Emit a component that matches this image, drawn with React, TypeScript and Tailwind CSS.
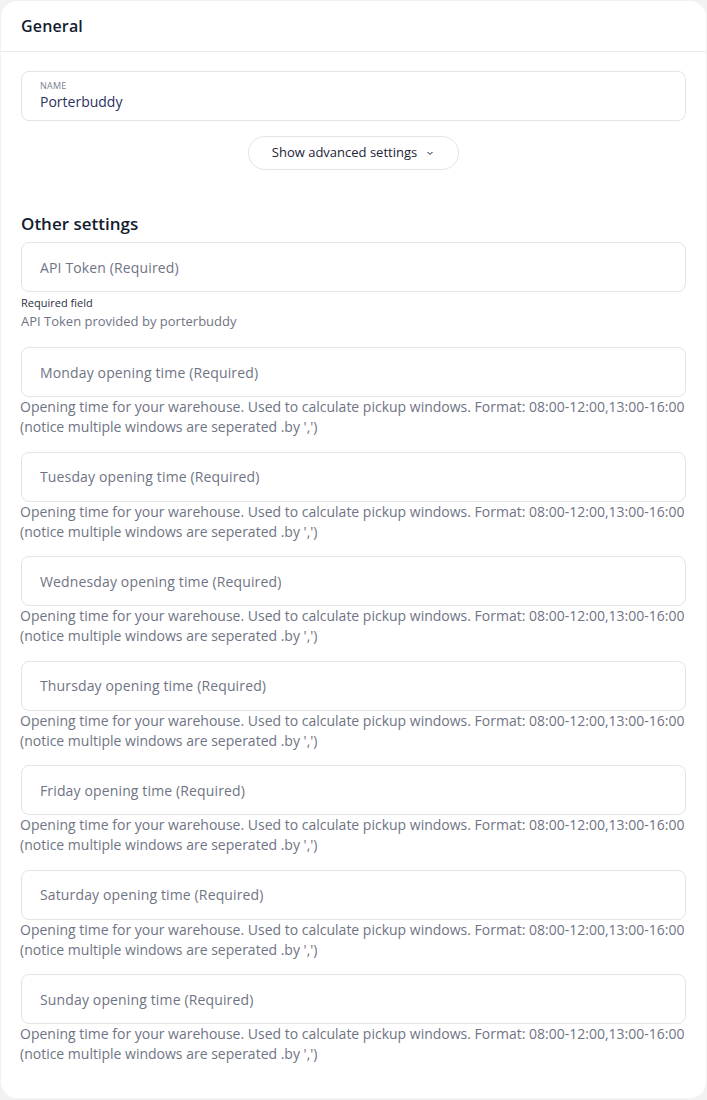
import React from 'react';

const days = ['Monday', 'Tuesday', 'Wednesday', 'Thursday', 'Friday', 'Saturday', 'Sunday'];

function TextField({ placeholder }: { placeholder: string }) {
  return (
    <div className="h-[50px] rounded-lg border border-[#e4e4e7] bg-white flex items-center px-[18px]">
      <span className="text-[14px] tracking-[0.01em] text-[#6f7484]">{placeholder}</span>
    </div>
  );
}

export default function App() {
  return (
    <div className="min-h-screen bg-[#f2f2f3] p-px" style={{ fontFamily: '"Open Sans", "Noto Sans", sans-serif' }}>
      <div className="bg-white rounded-2xl h-[1097px]">
        {/* Header */}
        <div className="h-[51px] border-b border-[#ebebeb] flex items-center px-5">
          <h2 className="text-[16px] font-semibold text-[#141c2f] tracking-[0.01em]">General</h2>
        </div>

        <div className="px-5 pt-[19px]">
          {/* Name */}
          <div className="h-[50px] rounded-lg border border-[#e4e4e7] px-[18px] flex flex-col justify-center">
            <span className="text-[9px] leading-[12px] uppercase text-[#7b8091] tracking-wide">Name</span>
            <span className="text-[14px] leading-[20px] text-[#2b3260]">Porterbuddy</span>
          </div>

          <div className="flex justify-center mt-[15px]">
            <button className="h-[34px] w-[211px] rounded-full border border-[#e4e4e7] flex items-center justify-center gap-2 text-[13px] font-medium text-[#1b2337]">
              Show advanced settings
              <svg width="10" height="10" viewBox="0 0 10 10" fill="none" stroke="currentColor" strokeWidth="1">
                <path d="M2.5 4l2.5 2.5L7.5 4" />
              </svg>
            </button>
          </div>

          {/* Other settings */}
          <h3 className="mt-[44px] text-[17px] leading-[20px] font-semibold text-[#141c2f]">Other settings</h3>

          <div className="mt-[8px]">
            <TextField placeholder="API Token (Required)" />
            <p className="mt-[3px] text-[11px] leading-[16px] text-[#2a3040]">Required field</p>
            <p className="text-[13px] leading-[20px] text-[#6f7484]">API Token provided by porterbuddy</p>
          </div>

          <div className="mt-[16px] flex flex-col gap-[14.5px]">
            {days.map((d) => (
              <div key={d}>
                <TextField placeholder={`${d} opening time (Required)`} />
                <p className="text-[14px] leading-[20px] text-[#6f7484] -mx-px">
                  Opening time for your warehouse. Used to calculate pickup windows. Format: 08:00-12:00,13:00-16:00 (notice multiple windows are seperated .by ',')
                </p>
              </div>
            ))}
          </div>
        </div>
      </div>
    </div>
  );
}
